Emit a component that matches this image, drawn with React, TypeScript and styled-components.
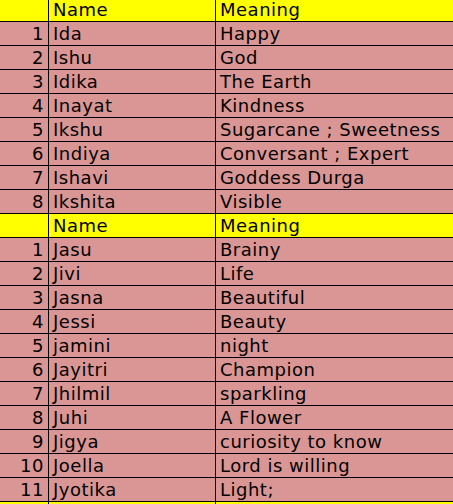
import styled, { createGlobalStyle } from "styled-components";

type Entry = [string, string];

const firstGroup: Entry[] = [
  ["Ida", "Happy"],
  ["Ishu", "God"],
  ["Idika", "The Earth"],
  ["Inayat", "Kindness"],
  ["Ikshu", "Sugarcane ; Sweetness"],
  ["Indiya", "Conversant ; Expert"],
  ["Ishavi", "Goddess Durga"],
  ["Ikshita", "Visible"],
];

const secondGroup: Entry[] = [
  ["Jasu", "Brainy"],
  ["Jivi", "Life"],
  ["Jasna", "Beautiful"],
  ["Jessi", "Beauty"],
  ["jamini", "night"],
  ["Jayitri", "Champion"],
  ["Jhilmil", "sparkling"],
  ["Juhi", "A Flower"],
  ["Jigya", "curiosity to know"],
  ["Joella", "Lord is willing"],
  ["Jyotika", "Light;"],
];

type RowProps = {
  $header?: boolean;
};

type CellProps = {
  $align?: "left" | "right";
};

const GlobalStyle = createGlobalStyle`
  html, body {
    margin: 0;
    padding: 0;
    overflow: hidden;
    background: #fff;
  }
`;

const HeaderRow = () => (
  <Row $header>
    <Cell />
    <Cell>Name</Cell>
    <Cell>Meaning</Cell>
  </Row>
);

const Group = ({ rows }: { rows: Entry[] }) => (
  <>
    <HeaderRow />
    {rows.map(([name, meaning], i) => (
      <Row key={name}>
        <Cell $align="right">{i + 1}</Cell>
        <Cell>{name}</Cell>
        <Cell>{meaning}</Cell>
      </Row>
    ))}
  </>
);

export default function App() {
  return (
    <>
      <GlobalStyle />
      <Sheet>
        <Group rows={firstGroup} />
        <Group rows={secondGroup} />
        {/* next block's header, only its top edge shows */}
        <Row $header>
          <Cell />
          <Cell />
          <Cell />
        </Row>
      </Sheet>
    </>
  );
}

const Sheet = styled.div`
  display: flex;
  flex-direction: column;
  width: 453px;
  margin-top: -2px;
  font-family: "DejaVu Sans", Verdana, sans-serif;
  font-size: 18px;
  letter-spacing: 0.5px;
  color: #000;
`;

const Row = styled.div<RowProps>`
  display: grid;
  grid-template-columns: 49px 167px 1fr;
  height: 24px;
  box-sizing: border-box;
  border-bottom: 1px solid #000;
  background: ${(p) => (p.$header ? "#ffff00" : "#da9694")};
`;

const Cell = styled.div<CellProps>`
  box-sizing: border-box;
  padding: 1px 4px 0 4px;
  line-height: 22px;
  white-space: nowrap;
  overflow: hidden;
  text-align: ${(p) => p.$align ?? "left"};
  border-right: 1px solid #000;

  &:last-child {
    border-right: none;
  }
`;
